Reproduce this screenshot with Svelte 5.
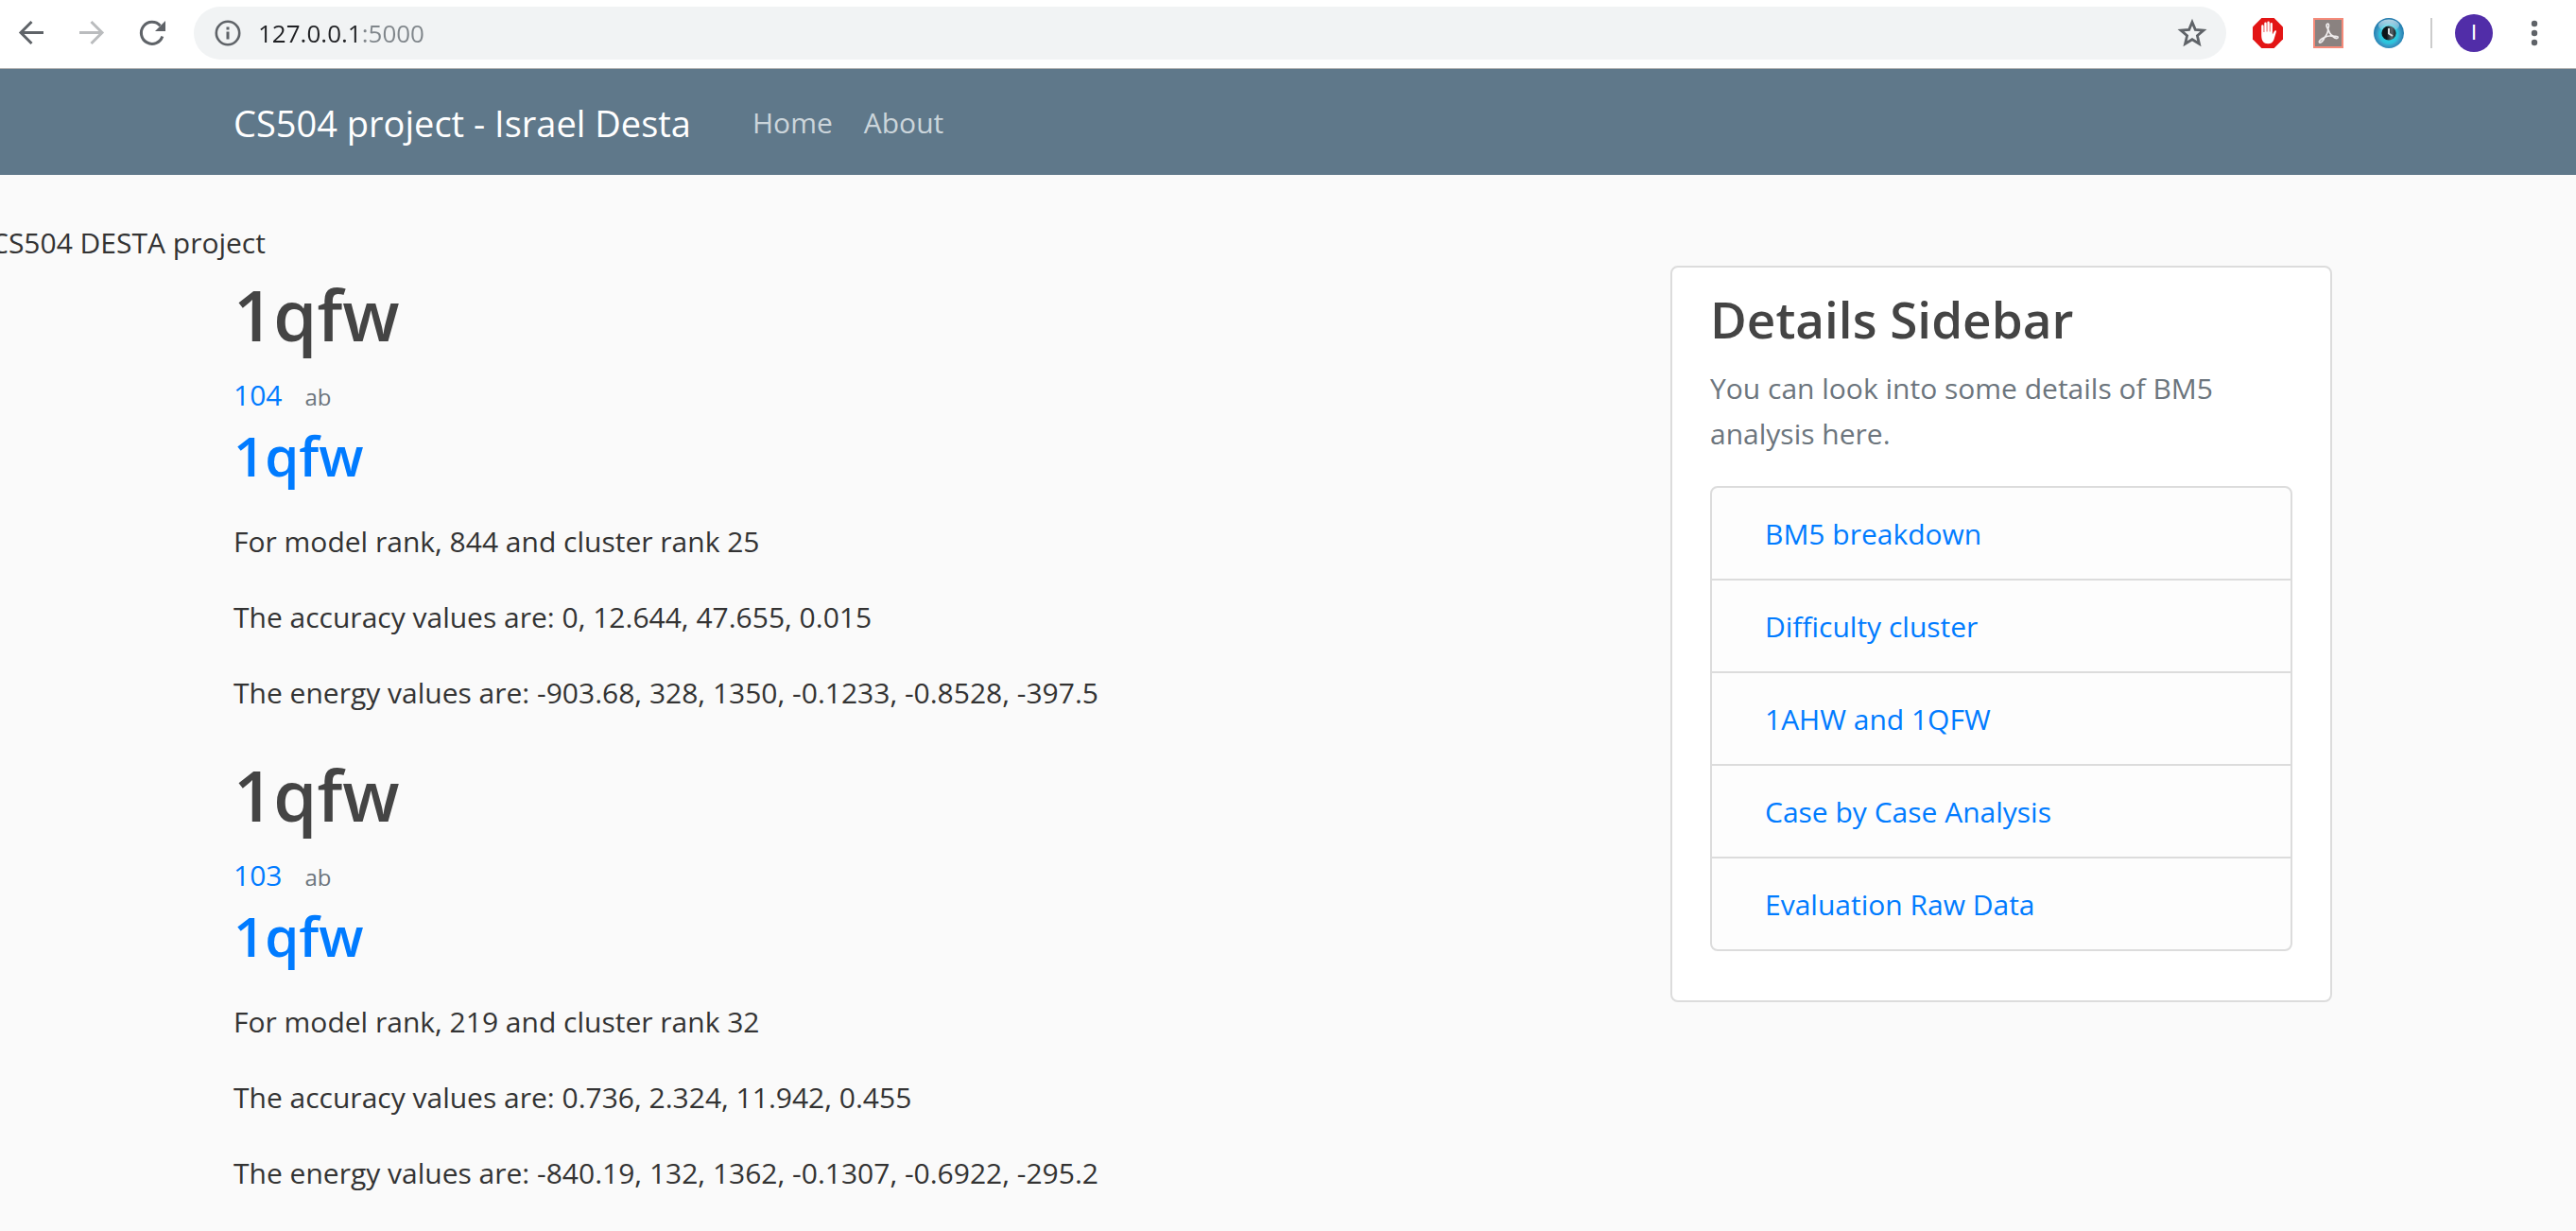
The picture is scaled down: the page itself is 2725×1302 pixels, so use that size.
<script>
  const posts = [
    {
      id: '104',
      author: 'ab',
      title: '1qfw',
      lines: [
        'For model rank, 844 and cluster rank 25',
        'The accuracy values are: 0, 12.644, 47.655, 0.015',
        'The energy values are: -903.68, 328, 1350, -0.1233, -0.8528, -397.5'
      ]
    },
    {
      id: '103',
      author: 'ab',
      title: '1qfw',
      lines: [
        'For model rank, 219 and cluster rank 32',
        'The accuracy values are: 0.736, 2.324, 11.942, 0.455',
        'The energy values are: -840.19, 132, 1362, -0.1307, -0.6922, -295.2'
      ]
    }
  ];

  const details = [
    'BM5 breakdown',
    'Difficulty cluster',
    '1AHW and 1QFW',
    'Case by Case Analysis',
    'Evaluation Raw Data'
  ];
</script>

<div class="toolbar">
  <div class="history">
    <button aria-label="Back">
      <svg viewBox="0 0 32 32"><path d="M29 15.500H5M16.500 4L5 15.500L16.500 27" fill="none" stroke="#5f6368" stroke-width="3" /></svg>
    </button>
    <button aria-label="Forward">
      <svg viewBox="0 0 32 32"><path d="M3 15.500H27M15.500 4L27 15.500L15.500 27" fill="none" stroke="#babcbe" stroke-width="3" /></svg>
    </button>
    <button aria-label="Reload">
      <svg viewBox="0 0 32 32">
        <path d="M26.800 19.500A11.500 11.500 0 1 1 24.500 8.200" fill="none" stroke="#5f6368" stroke-width="3" />
        <path d="M30 3V14H19Z" fill="#5f6368" />
      </svg>
    </button>
  </div>
  <div class="omnibox">
    <button aria-label="Site information">
      <svg viewBox="0 0 32 32">
        <circle cx="16" cy="16" r="12.200" fill="none" stroke="#5f6368" stroke-width="2.600" />
        <path d="M14.500 9.500h3v3h-3zM14.500 14.500h3v8h-3z" fill="#5f6368" />
      </svg>
    </button>
    <input type="text" aria-label="Address" value="127.0.0.1:5000" />
    <button aria-label="Bookmark this page">
      <svg viewBox="0 0 32 32"><path d="M16 4.500L19.300 12.400L28 13.100L21.400 18.800L23.400 27.200L16 22.700L8.600 27.200L10.600 18.800L4 13.100L12.700 12.400Z" fill="none" stroke="#5f6368" stroke-width="2.800" /></svg>
    </button>
  </div>
  <div class="extensions">
    <button aria-label="Ad blocker">
      <svg viewBox="0 0 32 32">
        <path d="M9.400 0H22.600L32 9.400V22.600L22.600 32H9.400L0 22.600V9.400Z" fill="#e31515" />
        <path d="M9.200 18V8.500a1.200 1.200 0 0 1 2.400 0V15h.700V5.800a1.200 1.200 0 0 1 2.400 0V14.500h.700V4.800a1.200 1.200 0 0 1 2.400 0V14.500h.700V6.200a1.200 1.200 0 0 1 2.400 0V17.500l2-3.600c.8-1.200 2.300-.8 2.100.4L22.400 23c-1 2.800-3 4.200-6.200 4.200c-4.600 0-7-2.600-7-9.200Z" fill="#fff" />
      </svg>
    </button>
    <button aria-label="PDF tools">
      <svg viewBox="0 0 32 32">
        <path d="M1 1H31V31H1Z" fill="#8a8280" stroke="#f58b7a" stroke-width="2" />
        <path d="M15.500 6c-2 0-1.800 2.800-.2 5.300c.6 1 1.300 2.600 2.200 4.700c1.200 2 2.400 3 4 3.200c2.400 0 5 .2 4.600 1.600c-.8 1.400-3.200.6-4.900-1c-2.700-1.300-6.500-.6-9.200.8c-1 2.800-3.600 6-5.300 5.400c-1.400-1.200 1.700-4.200 5.300-5.400c2-2.200 3.800-6 3.700-9.300c.9-2 1.400-5.100-.2-5.300Z" fill="none" stroke="#efecec" stroke-width="1.700" />
      </svg>
    </button>
    <button aria-label="Eye extension">
      <svg viewBox="0 0 32 32">
        <defs>
          <radialGradient id="iris" cx="50%" cy="54%" r="52%">
            <stop offset="0" stop-color="#27d5e8" />
            <stop offset=".58" stop-color="#2cc4dc" />
            <stop offset=".72" stop-color="#3d9fc9" />
            <stop offset="1" stop-color="#1f78ab" />
          </radialGradient>
          <linearGradient id="gloss" x1="0" y1="0" x2="0" y2="1">
            <stop offset="0" stop-color="#fff" stop-opacity=".65" />
            <stop offset="1" stop-color="#fff" stop-opacity=".1" />
          </linearGradient>
          <linearGradient id="pupil" x1="0" y1="0" x2="1" y2="0">
            <stop offset=".35" stop-color="#0c1519" />
            <stop offset=".7" stop-color="#59656b" />
            <stop offset="1" stop-color="#141c20" />
          </linearGradient>
        </defs>
        <circle cx="16" cy="16" r="16" fill="url(#iris)" />
        <ellipse cx="16" cy="8" rx="11" ry="6.500" fill="url(#gloss)" />
        <circle cx="16" cy="16" r="7.600" fill="url(#pupil)" />
        <path d="M16 11V16.500L20 19" fill="none" stroke="#d5dde0" stroke-width="2" />
      </svg>
    </button>
  </div>
  <span class="divider"></span>
  <button class="avatar" aria-label="Profile">I</button>
  <button class="menu" aria-label="Menu">
    <svg viewBox="0 0 32 32" fill="#5f6368"><circle cx="16" cy="6" r="3.200" /><circle cx="16" cy="16" r="3.200" /><circle cx="16" cy="26" r="3.200" /></svg>
  </button>
</div>

<header>
  <nav class="container">
    <a class="brand" href="#home">CS504 project - Israel Desta</a>
    <a href="#home">Home</a>
    <a href="#about">About</a>
  </nav>
</header>

<div class="page">
  <p class="tagline">CS504 DESTA project</p>
  <div class="container columns">
    <main>
      {#each posts as post}
        <article>
          <h1>{post.title}</h1>
          <div class="meta">
            <a href="#model-{post.id}">{post.id}</a>
            <small>{post.author}</small>
          </div>
          <h2><a href="#post-{post.id}">{post.title}</a></h2>
          {#each post.lines as line}
            <p>{line}</p>
          {/each}
        </article>
      {/each}
    </main>
    <aside>
      <section class="card">
        <h3>Details Sidebar</h3>
        <p>You can look into some details of BM5 analysis here.</p>
        <ul>
          {#each details as item, i}
            <li><a href="#detail-{i + 1}">{item}</a></li>
          {/each}
        </ul>
      </section>
    </aside>
  </div>
</div>

<style>
  :global(body) {
    margin: 0;
    background: #fafafa;
    color: #333;
    font: 30px/48px 'Open Sans', 'Noto Sans', sans-serif;
    overflow-x: hidden;
  }

  a {
    color: #007bff;
    text-decoration: none;
  }

  button {
    display: grid;
    place-items: center;
    flex: none;
    width: 32px;
    height: 32px;
    padding: 0;
    border: 0;
    background: none;
  }

  svg {
    display: block;
    width: 100%;
    height: 100%;
  }

  .toolbar {
    display: flex;
    align-items: center;
    padding: 7px 28px 9px 17px;
    border-bottom: 1px solid #b0b0b0;
    background: #fff;
  }

  .history,
  .extensions {
    display: flex;
    gap: 32px;
  }

  .omnibox {
    display: flex;
    flex: 1;
    align-items: center;
    gap: 16px;
    height: 56px;
    margin: 0 28px;
    padding: 0 20px;
    border-radius: 28px;
    background: #f1f3f4;
  }

  .omnibox input {
    flex: 1;
    min-width: 0;
    padding: 0;
    border: 0;
    outline: 0;
    color: #202124;
    font: 26px/40px 'Open Sans', 'Noto Sans', sans-serif;
    background: linear-gradient(90deg, #202124 107px, #80868b 107px);
    -webkit-background-clip: text;
    background-clip: text;
    -webkit-text-fill-color: transparent;
  }

  .divider {
    width: 2px;
    height: 32px;
    margin: 0 24px 0 28px;
    background: #ccc;
  }

  .avatar {
    width: 40px;
    height: 40px;
    border-radius: 50%;
    background: #512da8;
    color: #fff;
    font: 22px/40px Roboto, sans-serif;
  }

  .menu {
    margin-left: 28px;
  }

  header {
    padding-right: 11px;
    background: #5f788a;
  }

  .container {
    box-sizing: border-box;
    max-width: 2280px;
    margin: 0 auto;
  }

  nav {
    display: flex;
    align-items: center;
    gap: 33px;
    padding: 27px 30px 25px;
    line-height: 60px;
  }

  nav a {
    color: #cbd5db;
  }

  nav .brand {
    margin-right: 32px;
    color: #fff;
    font-size: 38px;
  }

  .page {
    padding: 48px 11px 0 0;
  }

  .tagline {
    margin: 0 0 0 -10px;
  }

  .columns {
    display: grid;
    grid-template-columns: 2fr 1fr;
    align-items: start;
  }

  main,
  aside {
    padding: 0 30px;
  }

  h1,
  h2,
  h3 {
    margin: 0;
    color: #444;
    font-weight: 600;
  }

  h1 {
    margin-bottom: 10px;
    font-size: 74px;
    line-height: 103px;
  }

  h2 {
    margin-bottom: 28px;
    font-size: 58px;
    line-height: 79px;
  }

  h3 {
    margin-bottom: 14px;
    font-size: 53px;
    line-height: 70px;
  }

  p {
    margin: 0 0 32px;
  }

  .meta {
    display: flex;
    align-items: baseline;
    gap: 24px;
  }

  small {
    color: #6c757d;
    font-size: 24px;
    line-height: 32px;
  }

  .card {
    padding: 20px 40px;
    border: 2px solid #dcdcdc;
    border-radius: 8px;
    background: #fff;
  }

  .card p {
    margin-bottom: 31px;
    color: #6c757d;
  }

  ul {
    margin: 0 0 32px;
    padding: 0;
    border: 2px solid #dcdcdc;
    border-radius: 8px;
    background: #fdfdfd;
    list-style: none;
  }

  li {
    padding: 25px 56px 23px;
  }

  li + li {
    border-top: 2px solid #dcdcdc;
  }
</style>
